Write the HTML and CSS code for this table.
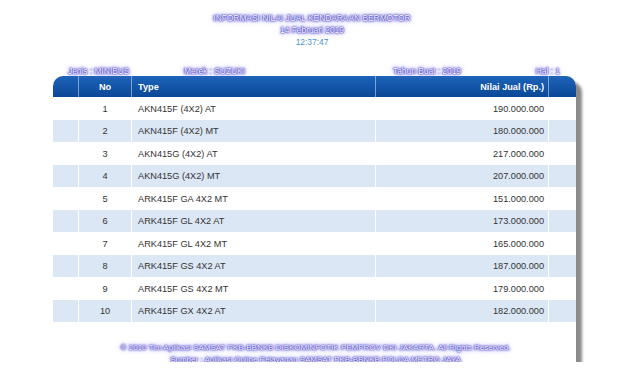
FILE: index.html
```html
<!DOCTYPE html>
<html>
<head>
<meta charset="utf-8">
<link rel="stylesheet" href="styles.css">
</head>
<body>
<div class="page">
  <div class="head">
    <div class="glow">INFORMASI NILAI JUAL KENDARAAN BERMOTOR</div>
    <div class="glow">14 Februari 2019</div>
    <div class="time">12:37:47</div>
  </div>
  <div class="sheet">
    <div class="info glow">
      <span>Jenis : MINIBUS</span>
      <span>Merek : SUZUKI</span>
      <span>Tahun Buat : 2019</span>
      <span>Hal : 1</span>
    </div>
    <div class="card">
      <table class="grid">
        <colgroup>
          <col class="c-pad"><col class="c-no"><col class="c-type"><col class="c-val"><col class="c-end">
        </colgroup>
        <thead>
          <tr><th class="first"></th><th class="no">No</th><th class="type">Type</th><th class="val">Nilai Jual (Rp.)</th><th class="last"></th></tr>
        </thead>
        <tbody>
          <tr><td></td><td class="no">1</td><td class="type">AKN415F (4X2) AT</td><td class="val">190.000.000</td><td></td></tr>
          <tr><td></td><td class="no">2</td><td class="type">AKN415F (4X2) MT</td><td class="val">180.000.000</td><td></td></tr>
          <tr><td></td><td class="no">3</td><td class="type">AKN415G (4X2) AT</td><td class="val">217.000.000</td><td></td></tr>
          <tr><td></td><td class="no">4</td><td class="type">AKN415G (4X2) MT</td><td class="val">207.000.000</td><td></td></tr>
          <tr><td></td><td class="no">5</td><td class="type">ARK415F GA 4X2 MT</td><td class="val">151.000.000</td><td></td></tr>
          <tr><td></td><td class="no">6</td><td class="type">ARK415F GL 4X2 AT</td><td class="val">173.000.000</td><td></td></tr>
          <tr><td></td><td class="no">7</td><td class="type">ARK415F GL 4X2 MT</td><td class="val">165.000.000</td><td></td></tr>
          <tr><td></td><td class="no">8</td><td class="type">ARK415F GS 4X2 AT</td><td class="val">187.000.000</td><td></td></tr>
          <tr><td></td><td class="no">9</td><td class="type">ARK415F GS 4X2 MT</td><td class="val">179.000.000</td><td></td></tr>
          <tr><td></td><td class="no">10</td><td class="type">ARK415F GX 4X2 AT</td><td class="val">182.000.000</td><td></td></tr>
        </tbody>
      </table>
      <div class="foot glow">
        <div>© 2010 Tim Aplikasi SAMSAT PKB-BBNKB DISKOMINFOTIK PEMPROV DKI JAKARTA. All Rights Reserved.</div>
        <div>Sumber : Aplikasi Online Pelayanan SAMSAT PKB-BBNKB POLDA METRO JAYA</div>
      </div>
    </div>
  </div>
</div>
</body>
</html>
```
FILE: styles.css
```css
html, body {
  margin: 0;
  padding: 0;
  background: #fff;
}
body {
  font-family: "Liberation Sans", Arial, sans-serif;
}
.page {
  width: 640px;
  height: 362px;
  overflow: hidden;
}
.head {
  width: 624px;
  padding-top: 12px;
  text-align: center;
  font-size: 8.4px;
  line-height: 12px;
}
.glow {
  color: #fff;
  text-shadow: 0 0 1px #231a9a, 0 0 2px #3328c0, 0 0 3px #4a40e0, 0 0 6px #9088ff;
}
.time {
  color: #4594cc;
}
.sheet {
  margin-left: 53px;
  width: 523px;
  padding-top: 17px;
}
.info {
  display: grid;
  grid-template-columns: 116px 209px 1fr auto;
  padding: 0 16px 0 15px;
  font-size: 8.4px;
  line-height: 12px;
  height: 12px;
}
.card {
  margin-top: -1px;
  box-shadow: 6px 6px 3px #8a8a8a;
  border-radius: 10px 10px 0 0;
  height: 400px;
  background: #fff;
}
.grid {
  width: 523px;
  border-collapse: separate;
  border-spacing: 0;
  table-layout: fixed;
  font-size: 9.2px;
  color: #333;
}
.c-pad { width: 25px; }
.c-no { width: 53px; }
.c-type { width: 244px; }
.c-val { width: 173px; }
.c-end { width: 28px; }
.grid th {
  height: 21px;
  padding: 0;
  background: linear-gradient(#1d64b9, #0b4797);
  color: #fff;
  font-weight: bold;
  border-left: 1px solid rgba(255,255,255,0.45);
}
.grid th.first {
  border-left: none;
  border-top-left-radius: 10px;
}
.grid th.last {
  border-top-right-radius: 10px;
}
.grid td {
  height: 21.5px;
  padding: 1px 0 0 0;
  border-left: 1px solid #fff;
}
.grid td:first-child {
  border-left: none;
}
.grid tbody tr:nth-child(even) td {
  background: #dce7f5;
}
.grid .no {
  text-align: center;
}
.grid .type {
  text-align: left;
  padding-left: 6px;
}
.grid .val {
  text-align: right;
  padding-right: 4px;
}
.foot {
  padding-top: 20px;
  padding-left: 2px;
  text-align: center;
  font-size: 8px;
  line-height: 12px;
}
```
